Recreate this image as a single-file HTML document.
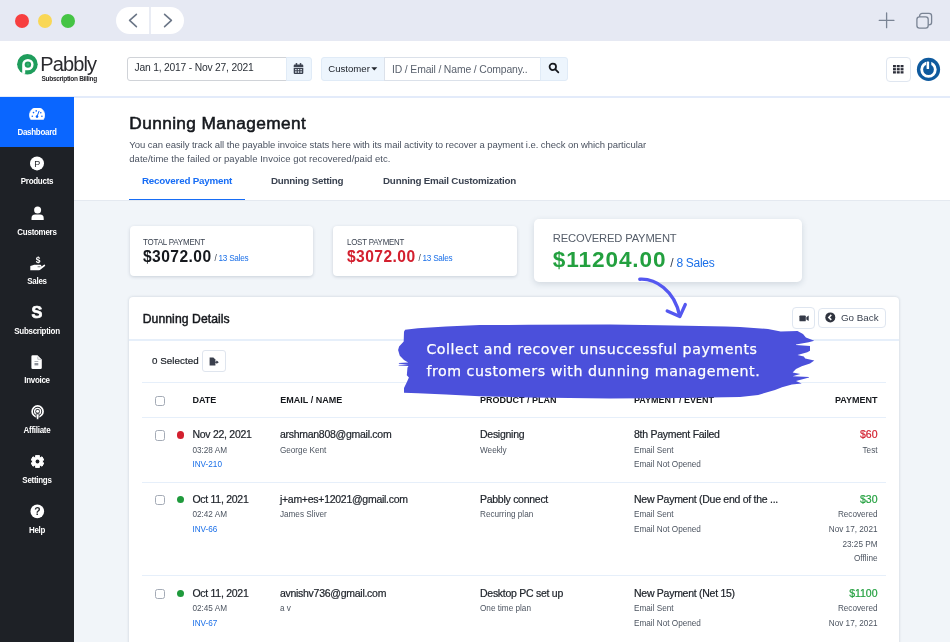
<!DOCTYPE html>
<html lang="en">
<head>
<meta charset="utf-8">
<title>Pabbly Subscription Billing - Dunning Management</title>
<style>
*{box-sizing:border-box;margin:0;padding:0}
html,body{width:950px;height:642px;overflow:hidden;background:#f1f5f9}
body{font-family:"Liberation Sans",sans-serif;color:#1f2329;position:relative;will-change:transform}
.abs{position:absolute}
.t{position:absolute;white-space:nowrap;line-height:1}
/* chrome */
#chrome{left:0;top:0;width:950px;height:41px;background:#e6e9f3}
.dot{position:absolute;top:13.7px;width:14px;height:14px;border-radius:50%}
#navpill{left:116px;top:7px;width:68px;height:27px;border-radius:14px;background:#fff}
#navpill i{position:absolute;left:33.3px;top:0;width:1.6px;height:27px;background:#e9ecf4}
/* header */
#header{left:0;top:41px;width:950px;height:57px;background:#fff;border-bottom:2px solid #e3ebfa}
.box{position:absolute;border:1px solid #d5dde8;background:#fff}
.lb{background:#edf5fd;border-color:#e0ebf7}
/* sidebar */
#side{left:0;top:97px;width:74px;height:545px;background:#1e2126}
#side .act{position:absolute;left:0;top:0;width:74px;height:50.4px;background:#0a66ff}
.sl{position:absolute;left:0;width:74px;text-align:center;color:#fff;font-weight:bold;font-size:8.6px;line-height:10px;letter-spacing:-0.3px;transform:scaleX(.93)}
.si{position:absolute;left:0;width:74px;height:18px}
.si svg{display:block;margin:0 auto}
/* page head */
#phead{left:74px;top:98px;width:876px;height:103px;background:#fff;border-bottom:1px solid #e4e9f0}
/* cards */
.card{position:absolute;background:#fff;border-radius:4px;box-shadow:0 1px 3.5px rgba(40,60,90,.2)}
#panel{left:129.2px;top:297px;width:769.8px;height:360px;background:#fff;border-radius:4px;box-shadow:0 0 3px rgba(40,60,90,.2)}
.hl{position:absolute;height:1.3px;background:#e6effa}
.cb{position:absolute;width:10.5px;height:10.5px;border:1px solid #a4abb6;border-radius:2.5px;background:#fff}
.b{font-weight:bold}
.sub{color:#4d5561}
.blue{color:#1a6fe8}
</style>
</head>
<body>

<!-- browser chrome -->
<div id="chrome" class="abs">
  <span class="dot" style="left:15.2px;background:#f73f3f"></span>
  <span class="dot" style="left:38.2px;background:#f9d755"></span>
  <span class="dot" style="left:61.2px;background:#45c444"></span>
  <div id="navpill" class="abs"><i></i>
    <svg class="abs" style="left:0;top:0" width="68" height="27" viewBox="0 0 68 27" fill="none" stroke="#6b7687" stroke-width="1.6" stroke-linecap="round" stroke-linejoin="round">
      <path d="M20.4 7.3 L13.6 13.4 L20.4 19.6"/><path d="M48.6 7.3 L55.4 13.4 L48.6 19.6"/>
    </svg>
  </div>
  <svg class="abs" style="left:876px;top:10px" width="64" height="22" viewBox="0 0 64 22" fill="none" stroke="#7a8494" stroke-width="1.3" stroke-linecap="round">
    <path d="M3.2 10.3 H18 M10.6 2.9 V17.7"/>
    <rect x="43.6" y="3.4" width="12" height="11.4" rx="2.6"/>
    <rect x="40.9" y="6.9" width="11.3" height="11.3" rx="2.6" fill="#e6e9f3"/>
  </svg>
</div>

<!-- app header -->
<div id="header" class="abs">
  <!-- logo -->
  <svg class="abs" style="left:16px;top:12px" width="24" height="24" viewBox="0 0 24 24">
    <circle cx="11.4" cy="11.2" r="10.3" fill="#1f9d5c"/>
    <path d="M6.2 21 V11.6 a5.7 5.7 0 1 1 5.7 5.7 H9.2 V20.8 Z" fill="#fff"/>
    <circle cx="11.9" cy="11.6" r="3.2" fill="#1f9d5c"/>
    <circle cx="11.9" cy="11.6" r="1.3" fill="#3bb273"/>
  </svg>
  <span id="lg1" class="t" style="left:40.3px;top:13.4px;font-size:20px;color:#2a2a2e;letter-spacing:-0.9px">Pabbly</span>
  <span id="lg2" class="t b" style="left:41.5px;top:35px;font-size:6.5px;color:#2a2a2e;letter-spacing:-0.3px">Subscription Billing</span>

  <!-- date range -->
  <div class="box" style="left:127px;top:15.5px;width:159.5px;height:24.5px;border-radius:3px 0 0 3px;border-color:#d0d3d8"></div>
  <span id="dt" class="t" style="left:134.5px;top:21.5px;font-size:10.3px;color:#2b3038;letter-spacing:-0.2px">Jan 1, 2017 - Nov 27, 2021</span>
  <div class="box lb" style="left:285.5px;top:15.5px;width:26px;height:24.5px;border-radius:0 3px 3px 0"></div>
  <svg class="abs" style="left:293px;top:22px" width="12" height="12" viewBox="0 0 12 12" fill="#3b4250">
    <rect x="2.7" y="0" width="1.5" height="2.6" rx=".6"/><rect x="6.8" y="0" width="1.5" height="2.6" rx=".6"/>
    <path d="M.7 2.7 a1.1 1.1 0 0 1 1.1 -1.1 h7.4 a1.1 1.1 0 0 1 1.1 1.1 V4 H.7Z"/>
    <path d="M.7 4.7 h9.6 V9.9 a1.1 1.1 0 0 1 -1.1 1.1 H1.8 a1.1 1.1 0 0 1 -1.1 -1.1Z M2.2 5.9 v1.4 h1.4 V5.9Z M4.8 5.9 v1.4 h1.4 V5.9Z M7.4 5.9 v1.4 h1.4 V5.9Z M2.2 8.3 v1.4 h1.4 V8.3Z M4.8 8.3 v1.4 h1.4 V8.3Z M7.4 8.3 v1.4 h1.4 V8.3Z" fill-rule="evenodd"/>
  </svg>

  <!-- search group -->
  <div class="box lb" style="left:321px;top:15.5px;width:63.5px;height:24.5px;border-radius:3px 0 0 3px"></div>
  <span id="cu" class="t" style="left:328.3px;top:23.2px;font-size:9.6px;color:#20252c">Customer</span>
  <svg class="abs" style="left:370.5px;top:26px" width="7" height="4" viewBox="0 0 7 4"><path d="M0.3 0.3 H6.3 L3.3 3.5Z" fill="#20252c"/></svg>
  <div class="box" style="left:383.5px;top:15.5px;width:157.5px;height:24.5px;border-color:#dbe1ea"></div>
  <span id="ph" class="t" style="left:392px;top:23.5px;font-size:10.4px;color:#5a626e;letter-spacing:-0.14px">ID / Email / Name / Company..</span>
  <div class="box lb" style="left:540px;top:15.5px;width:27.6px;height:24.5px;border-radius:0 3px 3px 0"></div>
  <svg class="abs" style="left:547.7px;top:21px" width="12" height="12" viewBox="0 0 13 13" fill="none" stroke="#15181d" stroke-width="1.9" stroke-linecap="round"><circle cx="5.2" cy="5.2" r="3.5"/><path d="M8 8 L11.2 11.2"/></svg>

  <!-- right icons -->
  <div class="box" style="left:886px;top:16px;width:24.5px;height:24.5px;border-radius:4px;border-color:#dfe6f0"></div>
  <svg class="abs" style="left:893px;top:23.6px" width="11" height="9" viewBox="0 0 11 9" fill="#2d2f3a">
    <rect x="0" y="0" width="2.9" height="2.3"/><rect x="3.8" y="0" width="2.9" height="2.3"/><rect x="7.6" y="0" width="2.9" height="2.3"/>
    <rect x="0" y="3.1" width="2.9" height="2.3"/><rect x="3.8" y="3.1" width="2.9" height="2.3"/><rect x="7.6" y="3.1" width="2.9" height="2.3"/>
    <rect x="0" y="6.2" width="2.9" height="2.3"/><rect x="3.8" y="6.2" width="2.9" height="2.3"/><rect x="7.6" y="6.2" width="2.9" height="2.3"/>
  </svg>
  <svg class="abs" style="left:916px;top:16px" width="25" height="25" viewBox="0 0 25 25">
    <circle cx="12.5" cy="12.4" r="11.6" fill="#0f5a9e"/>
    <circle cx="12.5" cy="12.6" r="6.8" fill="none" stroke="#fff" stroke-width="2.8"/>
    <rect x="10.1" y="3.4" width="5.2" height="9.4" fill="#0f5a9e"/>
    <rect x="10.6" y="4.6" width="2.5" height="7.4" rx=".6" fill="#fff"/>
  </svg>
</div>

<!-- sidebar -->
<div id="side" class="abs"><div class="act"></div>
  <!-- Dashboard -->
  <svg class="abs" style="left:29px;top:10.5px" width="16" height="12" viewBox="0 0 16 12">
    <path d="M1.7 11.4 A7.7 7.7 0 1 1 14.5 11.4 Z" fill="#fff" stroke="#fff" stroke-width=".6" stroke-linejoin="round"/>
    <g fill="#0a66ff"><circle cx="3.3" cy="8.3" r=".8"/><circle cx="4.5" cy="4.6" r=".8"/><circle cx="7.2" cy="2.9" r=".8"/><circle cx="11.8" cy="4.8" r=".8"/><circle cx="12.9" cy="8.3" r=".8"/><circle cx="8" cy="8.6" r="1.3"/></g>
    <path d="M8 8.6 L10 3.3" stroke="#0a66ff" stroke-width="1" stroke-linecap="round"/>
  </svg>
  <div id="s1" class="sl" style="top:29.7px">Dashboard</div>
  <!-- Products -->
  <svg class="abs" style="left:30px;top:59px" width="15" height="15" viewBox="0 0 15 15">
    <circle cx="7" cy="7.4" r="7" fill="#fff"/>
    <text x="7.3" y="10.6" text-anchor="middle" font-family="Liberation Sans, sans-serif" font-size="9" fill="#1e2126">P</text>
  </svg>
  <div id="s2" class="sl" style="top:79.2px">Products</div>
  <!-- Customers -->
  <svg class="abs" style="left:30.5px;top:109px" width="14" height="15" viewBox="0 0 14 15" fill="#fff">
    <circle cx="6.6" cy="3.9" r="3.5"/>
    <path d="M0.5 14 V12.2 a3.6 3.6 0 0 1 3.6 -3.6 h5 a3.6 3.6 0 0 1 3.6 3.6 V14 Z"/>
  </svg>
  <div id="s3" class="sl" style="top:129.9px">Customers</div>
  <!-- Sales -->
  <svg class="abs" style="left:29.5px;top:158.5px" width="16" height="15" viewBox="0 0 16 15" fill="#fff">
    <text x="8.1" y="6.8" text-anchor="middle" font-family="Liberation Sans, sans-serif" font-weight="bold" font-size="8.4" fill="#fff">$</text>
    <path d="M0.3 10.1 L2 9.6 L4.2 8.7 H10.2 Q11.4 8.8 11.3 9.9 L11.6 10.4 L13.6 8.9 Q14.6 8.3 15.1 9 Q15.4 9.7 14.7 10.3 L10.6 13.6 Q9.9 14.2 9 14.2 H0.3 Z"/>
    <path d="M7.6 10.75 H10.4" stroke="#1e2126" stroke-width=".6" fill="none"/>
  </svg>
  <div id="s4" class="sl" style="top:178.9px">Sales</div>
  <!-- Subscription -->
  <div id="sS" class="t b" style="left:0;width:74px;text-align:center;top:207px;font-size:16.3px;color:#fff;-webkit-text-stroke:.7px #fff">S</div>
  <div id="s5" class="sl" style="top:228.8px">Subscription</div>
  <!-- Invoice -->
  <svg class="abs" style="left:31.2px;top:258px" width="12" height="15" viewBox="0 0 12 15">
    <path d="M1.7 0.3 H6.5 L10.8 4.4 V12.8 a1.3 1.3 0 0 1 -1.3 1.3 H1.7 a1.3 1.3 0 0 1 -1.3 -1.3 V1.6 a1.3 1.3 0 0 1 1.3 -1.3Z" fill="#fff"/>
    <path d="M6.8 1.6 V4.3 H10" fill="none" stroke="#a9adb3" stroke-width=".8"/>
    <path d="M3.5 6.5 h3.8" stroke="#8b9098" stroke-width=".7"/>
    <rect x="3.5" y="8" width="3.8" height="2.4" fill="#8b9098"/>
  </svg>
  <div id="s6" class="sl" style="top:278.2px">Invoice</div>
  <!-- Affiliate -->
  <svg class="abs" style="left:30.5px;top:307.5px" width="14" height="15" viewBox="0 0 14 15" fill="none" stroke="#fff">
    <circle cx="6.6" cy="6.4" r="5.45" stroke-width="1.7"/>
    <circle cx="6.6" cy="6.4" r="3" stroke-width="1.35"/>
    <circle cx="6.6" cy="6.3" r="1.5" fill="#fff" stroke="none"/>
    <path d="M5 8.9 h3.2 l-.4 4.4 a1.2 1.2 0 0 1 -2.4 0Z" fill="#fff" stroke="#1e2126" stroke-width=".7"/>
  </svg>
  <div id="s7" class="sl" style="top:328.4px">Affiliate</div>
  <!-- Settings -->
  <svg class="abs" style="left:30.5px;top:358px" width="13" height="13" viewBox="0 0 13 13">
    <path d="M4.58 1.99 L4.75 0.24 L8.25 0.24 L8.42 1.99 L9.44 2.58 L11.05 1.85 L12.80 4.89 L11.36 5.91 L11.36 7.09 L12.80 8.11 L11.05 11.15 L9.44 10.42 L8.42 11.01 L8.25 12.76 L4.75 12.76 L4.58 11.01 L3.56 10.42 L1.95 11.15 L0.20 8.11 L1.64 7.09 L1.64 5.91 L0.20 4.89 L1.95 1.85 L3.56 2.58Z" fill="#fff" stroke="#fff" stroke-width="1" stroke-linejoin="round"/>
    <circle cx="6.5" cy="6.5" r="1.9" fill="#1e2126"/>
  </svg>
  <div id="s8" class="sl" style="top:377.8px">Settings</div>
  <!-- Help -->
  <svg class="abs" style="left:30px;top:407px" width="15" height="15" viewBox="0 0 15 15">
    <circle cx="7.3" cy="7.4" r="6.8" fill="#fff"/>
    <text x="7.35" y="11" text-anchor="middle" font-family="Liberation Sans, sans-serif" font-weight="bold" font-size="10.4" fill="#1e2126">?</text>
  </svg>
  <div id="s9" class="sl" style="top:427.8px">Help</div>
</div>

<!-- page head -->
<div id="phead" class="abs">
  <span id="h1" class="t" style="left:55.3px;top:17.4px;font-size:17.3px;color:#15181d;letter-spacing:.38px;-webkit-text-stroke:.55px">Dunning Management</span>
  <span id="d1" class="t" style="left:55.3px;top:42.4px;font-size:9.5px;color:#4a5260;letter-spacing:-0.06px">You can easily track all the payable invoice stats here with its mail activity to recover a payment i.e. check on which particular</span>
  <span id="d2" class="t" style="left:55.3px;top:55.7px;font-size:9.5px;color:#4a5260;letter-spacing:.03px">date/time the failed or payable Invoice got recovered/paid etc.</span>
  <span id="t1" class="t b" style="left:68px;top:77.8px;font-size:9.8px;color:#176df5;letter-spacing:-0.21px">Recovered Payment</span>
  <span id="t2" class="t b" style="left:196.9px;top:77.8px;font-size:9.8px;color:#3a4250;letter-spacing:-0.21px">Dunning Setting</span>
  <span id="t3" class="t b" style="left:309px;top:77.8px;font-size:9.8px;color:#3a4250;letter-spacing:-0.21px">Dunning Email Customization</span>
  <div class="abs" style="left:55.3px;top:100.6px;width:115.4px;height:1.7px;background:#176df5"></div>
</div>

<!-- cards / panel -->
<div class="card" style="left:129.5px;top:226px;width:183.5px;height:50px"></div>
<span id="c1a" class="t" style="left:143px;top:238px;font-size:8.6px;color:#3a4250;letter-spacing:-0.2px;transform:scaleX(.928);transform-origin:0 50%">TOTAL PAYMENT</span>
<span id="c1b" class="t b" style="left:143px;top:248.8px;font-size:15.6px;color:#15181d;letter-spacing:.43px">$3072.00</span>
<span id="c1c" class="t" style="left:214.4px;top:254.6px;font-size:8.2px;color:#3a4250;letter-spacing:-0.24px">/ <span class="blue">13 Sales</span></span>

<div class="card" style="left:333px;top:226px;width:184px;height:50px"></div>
<span id="c2a" class="t" style="left:347px;top:238px;font-size:8.6px;color:#3a4250;letter-spacing:-0.2px;transform:scaleX(.915);transform-origin:0 50%">LOST PAYMENT</span>
<span id="c2b" class="t b" style="left:347px;top:248.8px;font-size:15.6px;color:#d3202f;letter-spacing:.43px">$3072.00</span>
<span id="c2c" class="t" style="left:418.4px;top:254.6px;font-size:8.2px;color:#3a4250;letter-spacing:-0.24px">/ <span class="blue">13 Sales</span></span>

<div class="card" style="left:534px;top:219px;width:267.5px;height:63.4px;border-radius:5px;box-shadow:0 2px 6px rgba(40,60,90,.16)"></div>
<span id="c3a" class="t" style="left:552.8px;top:232.8px;font-size:11.2px;color:#555d69;letter-spacing:-0.16px">RECOVERED PAYMENT</span>
<span id="c3b" class="t b" style="left:552.8px;top:248.7px;font-size:22.6px;color:#23a03f;letter-spacing:.9px">$11204.00</span>
<span id="c3c" class="t" style="left:670.3px;top:257px;font-size:12px;color:#3a4250;letter-spacing:-0.28px">/ <span class="blue">8 Sales</span></span>

<div id="panel" class="abs"></div>
<span id="p1" class="t" style="left:142.7px;top:313.2px;font-size:12.2px;color:#15181d;letter-spacing:.07px;-webkit-text-stroke:.45px">Dunning Details</span>
<div class="hl" style="left:129.2px;top:339.3px;width:769.8px"></div>
<span id="p2" class="t" style="left:151.9px;top:355.9px;font-size:9.8px;color:#20252c;letter-spacing:.05px;-webkit-text-stroke:.2px">0 Selected</span>
<div class="box" style="left:202.2px;top:350.3px;width:23.6px;height:22px;border-radius:3px;border-color:#dfe5ee"></div>
<div class="hl" style="left:142.2px;top:382px;width:744px"></div>

<!-- table head -->
<div class="cb" style="left:154.7px;top:395.8px"></div>
<span id="th1" class="t b" style="left:192.5px;top:395.9px;font-size:9px;color:#15181d">DATE</span>
<span id="th2" class="t b" style="left:280.3px;top:395.9px;font-size:9px;color:#15181d">EMAIL / NAME</span>
<span id="th3" class="t b" style="left:480px;top:395.9px;font-size:9px;color:#15181d">PRODUCT / PLAN</span>
<span id="th4" class="t b" style="left:634px;top:395.9px;font-size:9px;color:#15181d">PAYMENT / EVENT</span>
<span id="th5" class="t b" style="right:72.5px;top:395.9px;font-size:9px;color:#15181d">PAYMENT</span>
<div class="hl" style="left:142.2px;top:416.8px;width:744px"></div>

<!-- rows inserted here -->
<!-- row 1 -->
<div class="cb" style="left:154.7px;top:430.1px"></div>
<div class="abs" style="left:176.7px;top:431.4px;width:7.2px;height:7.2px;border-radius:50%;background:#d3202f"></div>
<span class="t" style="left:192.4px;top:429.4px;font-size:10.5px;color:#20252c;letter-spacing:-0.27px;-webkit-text-stroke:.2px">Nov 22, 2021</span>
<span class="t" style="left:192.4px;top:446.8px;font-size:8.2px;color:#4d5561">03:28 AM</span>
<span class="t" style="left:192.4px;top:461.4px;font-size:8.2px;color:#4d5561;color:#1a6fe8">INV-210</span>
<span class="t" style="left:279.9px;top:429.4px;font-size:10.5px;color:#20252c;letter-spacing:-0.27px;-webkit-text-stroke:.2px">arshman808@gmail.com</span>
<span class="t" style="left:279.9px;top:446.8px;font-size:8.2px;color:#4d5561">George Kent</span>
<span class="t" style="left:480px;top:429.4px;font-size:10.5px;color:#20252c;letter-spacing:-0.27px;-webkit-text-stroke:.2px">Designing</span>
<span class="t" style="left:480px;top:446.8px;font-size:8.2px;color:#4d5561">Weekly</span>
<span class="t" style="left:634px;top:429.4px;font-size:10.5px;color:#20252c;letter-spacing:-0.27px;-webkit-text-stroke:.2px">8th Payment Failed</span>
<span class="t" style="left:634px;top:446.8px;font-size:8.2px;color:#4d5561">Email Sent</span>
<span class="t" style="left:634px;top:461.4px;font-size:8.2px;color:#4d5561">Email Not Opened</span>
<span class="t" style="right:72.5px;top:429.4px;font-size:10.5px;color:#20252c;letter-spacing:-0.02px;-webkit-text-stroke:.2px;color:#d3202f">$60</span>
<span class="t" style="right:72.5px;top:446.8px;font-size:8.2px;color:#4d5561">Test</span>
<div class="hl" style="left:142.2px;top:481.6px;width:744px"></div>
<!-- row 2 -->
<div class="cb" style="left:154.7px;top:494.7px"></div>
<div class="abs" style="left:176.7px;top:496.0px;width:7.2px;height:7.2px;border-radius:50%;background:#1f9a3c"></div>
<span class="t" style="left:192.4px;top:494.0px;font-size:10.5px;color:#20252c;letter-spacing:-0.27px;-webkit-text-stroke:.2px">Oct 11, 2021</span>
<span class="t" style="left:192.4px;top:511.4px;font-size:8.2px;color:#4d5561">02:42 AM</span>
<span class="t" style="left:192.4px;top:526.0px;font-size:8.2px;color:#4d5561;color:#1a6fe8">INV-66</span>
<span class="t" style="left:279.9px;top:494.0px;font-size:10.5px;color:#20252c;letter-spacing:-0.27px;-webkit-text-stroke:.2px">j+am+es+12021@gmail.com</span>
<span class="t" style="left:279.9px;top:511.4px;font-size:8.2px;color:#4d5561">James Sliver</span>
<span class="t" style="left:480px;top:494.0px;font-size:10.5px;color:#20252c;letter-spacing:-0.27px;-webkit-text-stroke:.2px">Pabbly connect</span>
<span class="t" style="left:480px;top:511.4px;font-size:8.2px;color:#4d5561">Recurring plan</span>
<span class="t" style="left:634px;top:494.0px;font-size:10.5px;color:#20252c;letter-spacing:-0.27px;-webkit-text-stroke:.2px">New Payment (Due end of the ...</span>
<span class="t" style="left:634px;top:511.4px;font-size:8.2px;color:#4d5561">Email Sent</span>
<span class="t" style="left:634px;top:526.0px;font-size:8.2px;color:#4d5561">Email Not Opened</span>
<span class="t" style="right:72.5px;top:494.0px;font-size:10.5px;color:#20252c;letter-spacing:-0.02px;-webkit-text-stroke:.2px;color:#23a03f">$30</span>
<span class="t" style="right:72.5px;top:511.4px;font-size:8.2px;color:#4d5561">Recovered</span>
<span class="t" style="right:72.5px;top:526.0px;font-size:8.2px;color:#4d5561">Nov 17, 2021</span>
<span class="t" style="right:72.5px;top:540.5px;font-size:8.2px;color:#4d5561">23:25 PM</span>
<span class="t" style="right:72.5px;top:555.0px;font-size:8.2px;color:#4d5561">Offline</span>
<div class="hl" style="left:142.2px;top:574.7px;width:744px"></div>
<!-- row 3 -->
<div class="cb" style="left:154.7px;top:588.6px"></div>
<div class="abs" style="left:176.7px;top:589.9px;width:7.2px;height:7.2px;border-radius:50%;background:#1f9a3c"></div>
<span class="t" style="left:192.4px;top:587.9px;font-size:10.5px;color:#20252c;letter-spacing:-0.27px;-webkit-text-stroke:.2px">Oct 11, 2021</span>
<span class="t" style="left:192.4px;top:605.3px;font-size:8.2px;color:#4d5561">02:45 AM</span>
<span class="t" style="left:192.4px;top:619.9px;font-size:8.2px;color:#4d5561;color:#1a6fe8">INV-67</span>
<span class="t" style="left:279.9px;top:587.9px;font-size:10.5px;color:#20252c;letter-spacing:-0.27px;-webkit-text-stroke:.2px">avnishv736@gmail.com</span>
<span class="t" style="left:279.9px;top:605.3px;font-size:8.2px;color:#4d5561">a v</span>
<span class="t" style="left:480px;top:587.9px;font-size:10.5px;color:#20252c;letter-spacing:-0.27px;-webkit-text-stroke:.2px">Desktop PC set up</span>
<span class="t" style="left:480px;top:605.3px;font-size:8.2px;color:#4d5561">One time plan</span>
<span class="t" style="left:634px;top:587.9px;font-size:10.5px;color:#20252c;letter-spacing:-0.27px;-webkit-text-stroke:.2px">New Payment (Net 15)</span>
<span class="t" style="left:634px;top:605.3px;font-size:8.2px;color:#4d5561">Email Sent</span>
<span class="t" style="left:634px;top:619.9px;font-size:8.2px;color:#4d5561">Email Not Opened</span>
<span class="t" style="right:72.5px;top:587.9px;font-size:10.5px;color:#20252c;letter-spacing:-0.02px;-webkit-text-stroke:.2px;color:#23a03f">$1100</span>
<span class="t" style="right:72.5px;top:605.3px;font-size:8.2px;color:#4d5561">Recovered</span>
<span class="t" style="right:72.5px;top:619.9px;font-size:8.2px;color:#4d5561">Nov 17, 2021</span>
<!-- buttons -->
<div class="box" style="left:792.3px;top:307.3px;width:22.4px;height:22px;border-radius:4px;border-color:#dfe6f0"></div>
<svg class="abs" style="left:798.5px;top:314.5px" width="11" height="7" viewBox="0 0 11 7" fill="#353a48"><rect x=".4" y=".4" width="6.4" height="5.9" rx=".9"/><path d="M7.3 2.2 L9.7 .6 V6.1 L7.3 4.5Z"/></svg>
<div class="box" style="left:818.1px;top:308.2px;width:67.6px;height:19.4px;border-radius:4px;border-color:#dfe6f0"></div>
<svg class="abs" style="left:825px;top:312.2px" width="11" height="11" viewBox="0 0 11 11"><circle cx="5.3" cy="5.4" r="5" fill="#30343f"/><path d="M6.3 2.9 L3.8 5.4 L6.3 7.9" fill="none" stroke="#fff" stroke-width="1.5"/></svg>
<span id="gb" class="t" style="left:841px;top:313.1px;font-size:9.8px;color:#3a4250">Go Back</span>
<svg class="abs" style="left:209px;top:356.5px" width="11" height="9" viewBox="0 0 11 9"><path d="M.6 .5 H4.4 L6.4 2.5 V8.4 H.6Z" fill="#3a3f4c"/><path d="M4 5.2 H8.2 M7.4 4 L8.9 5.2 L7.4 6.4" fill="none" stroke="#3a3f4c" stroke-width="1.1"/></svg>

<!-- callout -->
<svg class="abs" style="left:0;top:0" width="950" height="642" viewBox="0 0 950 642">
  <path d="M405.1,329.7 L418,328.3 L446,326.5 L479.7,325.1 L529,324.8 L610,324.6 L660,325.3 L725.8,326.6 L740,326.9 L768,329 L780.7,331.5 L797.5,331.1 L803,333.9 L805.9,337.4 L814.3,340.7 L808.7,342.3 L796,344.4 L796,345 L810,346.1 L810,350.7 L807.3,352.2 L797.5,355 L803.8,356.4 L805.2,358.5 L814.3,360.6 L810,363.4 L801.7,366.2 L796,369 L792.6,372.5 L800.3,373.9 L792.6,376.2 L809,377 L809,377.6 L796,380.9 L801.7,383.5 L791.9,384.4 L782,387.2 L775,390 L758.2,394.9 L740,397 L680,398 L610,398.4 L529,397.4 L479.7,396.3 L446,394.6 L418,393.2 L404,392.8 L404,387.9 L406.8,382.3 L408.9,377.4 L406.8,375.3 L407.5,367.6 L408.5,366 L398.7,365.6 L398.7,364.9 L408.5,364.4 L398.9,363.8 L398.9,363 L408.2,362.4 L404,359.9 L399.8,355.7 L398.1,350 L399.1,346.5 L403.7,341.6 L404,331.8 Z" fill="#4b50db"/>
  <path d="M639.8 279.2 C655 278.3 674.5 290 679.6 315.6" fill="none" stroke="#5457f0" stroke-width="3.4" stroke-linecap="round"/>
  <path d="M667.2 310.9 L679.8 316.6 L685.3 304.5" fill="none" stroke="#5457f0" stroke-width="3.3" stroke-linecap="round" stroke-linejoin="round"/>
</svg>
<span id="b1" class="t" style="left:426.4px;top:341.8px;font-family:'DejaVu Sans',sans-serif;font-size:14.2px;letter-spacing:.54px;color:#fff;-webkit-text-stroke:.25px #fff">Collect and recover unsuccessful payments</span>
<span id="b2" class="t" style="left:426.4px;top:363.7px;font-family:'DejaVu Sans',sans-serif;font-size:14.2px;letter-spacing:.54px;color:#fff;-webkit-text-stroke:.25px #fff">from customers with dunning management.</span>


</body>
</html>
